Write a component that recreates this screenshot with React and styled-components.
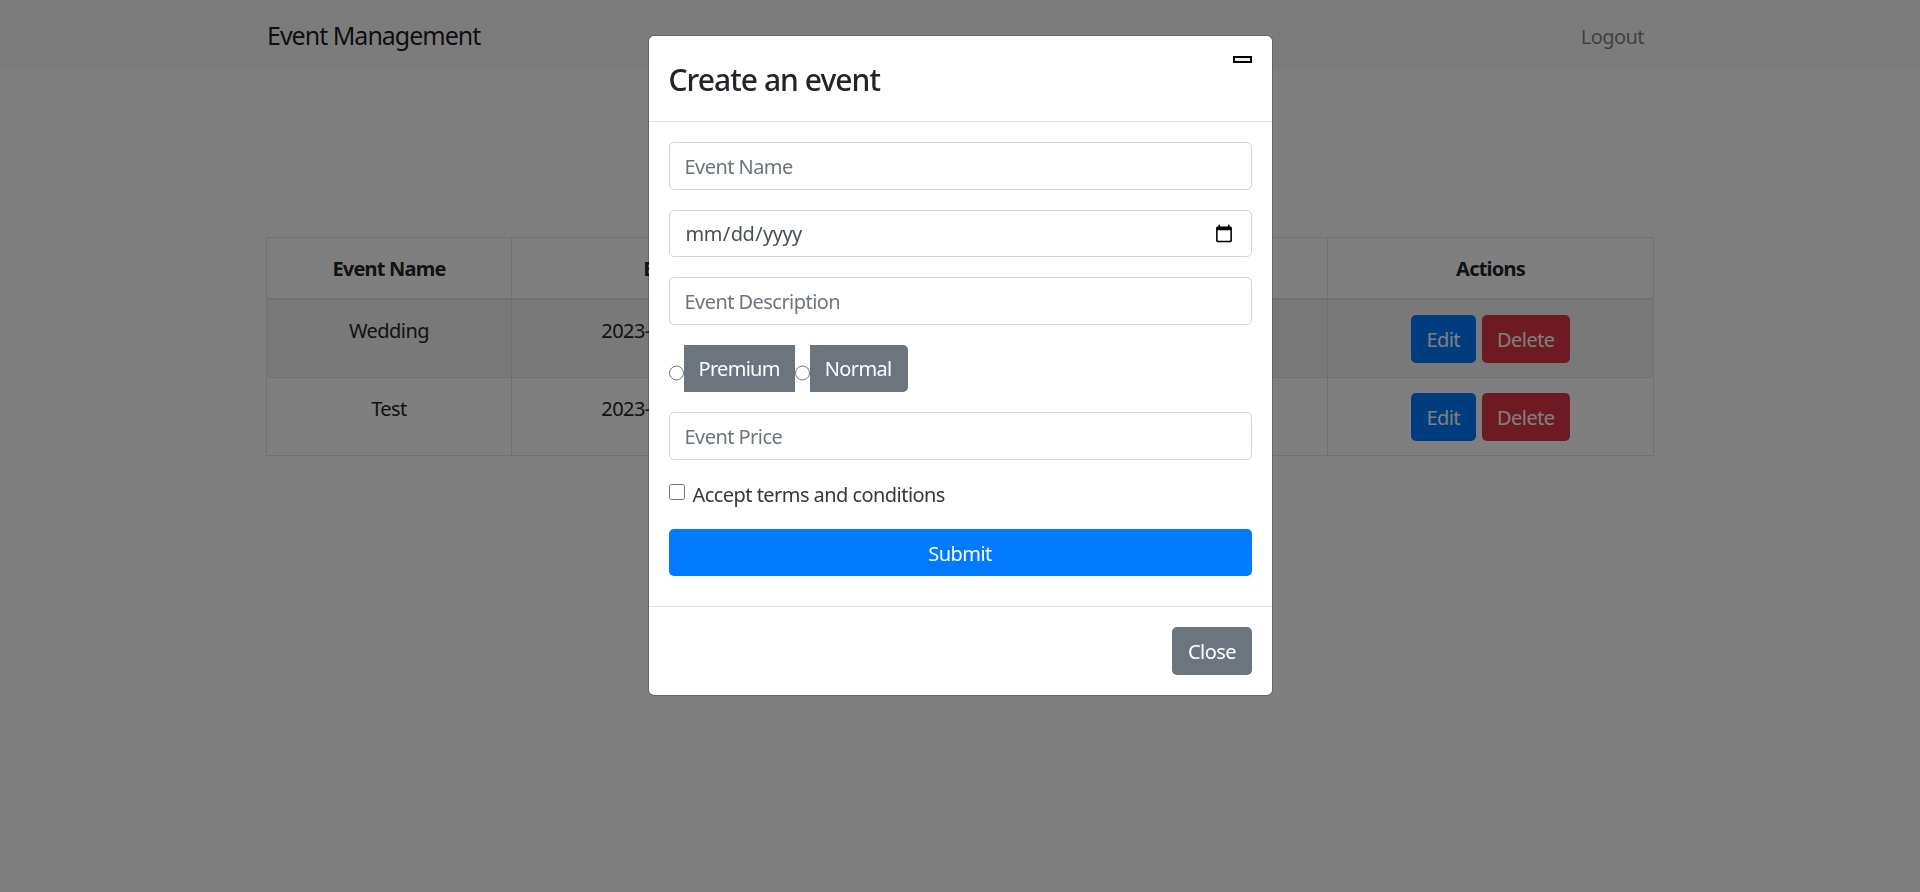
import React from "react";
import styled, { createGlobalStyle } from "styled-components";

const FONT = `"Noto Sans", "Open Sans", Arial, sans-serif`;

const Global = createGlobalStyle`
  * { box-sizing: border-box; }
  html, body { margin: 0; padding: 0; height: 100%; background: #fff; }
  body { font-family: ${FONT}; font-size: 20px; line-height: 30px; color: #212529; letter-spacing: -0.55px; overflow: hidden; }
  input, button { font-family: ${FONT}; letter-spacing: -0.55px; }
`;

const Navbar = styled.nav`
  height: 70px; background: #f8f9fa; padding-left: 266px;
`;
const NavInner = styled.div`
  width: 1388px; height: 100%; display: flex; align-items: center; justify-content: space-between; padding: 0 10px 0 1px;
`;
const Brand = styled.a`
  font-size: 25px; line-height: 37px; color: rgba(0,0,0,.9); letter-spacing: -1px;
`;
const NavLink = styled.a`
  color: rgba(0,0,0,.5); padding-top: 3px;
`;
const Main = styled.main`
  width: 1387px; margin-left: 266px; padding-top: 167px;
`;
const Table = styled.table`
  width: 100%; border-collapse: collapse; table-layout: fixed; text-align: center;
`;
const Th = styled.th`
  border: 1px solid #dee2e6; border-bottom-width: 2px; padding: 16px 15px 14px; font-weight: 700; vertical-align: bottom; white-space: nowrap; letter-spacing: -0.8px;
`;
const Td = styled.td`
  border: 1px solid #dee2e6; padding: 16px 15px 14px; vertical-align: top; white-space: nowrap; height: 77.5px;
`;
const ActionsTd = styled(Td)`
  padding: 15px 15px 14.5px;
`;
const Tr = styled.tr`
  background: ${p => (p.$striped ? "rgba(0,0,0,.05)" : "transparent")};
`;
const Btn = styled.button`
  height: 47.5px; padding: ${p => (p.$full ? "4px" : "2px")} 15.5px 0; border: 0; border-radius: 5px; color: #fff; font-size: 20px; line-height: 30px;
  background: ${p => p.$bg};
  ${p => p.$full && "width: 100%; display: block;"}
`;
const Actions = styled.div`
  display: flex; justify-content: center; gap: 6px;
`;
const Backdrop = styled.div`
  position: fixed; inset: 0; background: rgba(0,0,0,.5); display: flex; justify-content: center; align-items: flex-start; padding-top: 35px;
`;
const Modal = styled.div`
  width: 625px; background: #fff; border: 1px solid rgba(0,0,0,.2); border-radius: 6px; background-clip: padding-box;
`;
const ModalHeader = styled.header`
  display: flex; justify-content: space-between; align-items: flex-start; padding: 20px 20px 19px; border-bottom: 1px solid #dee2e6;
`;
const Title = styled.h4`
  margin: 1px 0 0; font-size: 30px; line-height: 45px; font-weight: 500; letter-spacing: -0.95px;
`;
const CloseBox = styled.button`
  width: 19px; height: 7px; padding: 0; border: 2px solid #000; background: #efefef;
`;
const ModalBody = styled.form`
  padding: 20px 20px 30px; display: flex; flex-direction: column; gap: 20px;
`;
const Input = styled.input`
  display: block; width: 100%; height: 47.5px; padding: 8.5px 15px 6.5px; border: 1px solid #ced4da; border-radius: 5px; background: #fff; color: #495057; font-size: 20px; line-height: 30px;
  &::placeholder { color: #6c757d; opacity: 1; }
`;
const RadioRow = styled.div`
  display: flex; align-items: flex-start; height: 47.5px;
`;
const Radio = styled.input`
  width: 15px; height: 16px; margin: 20px 0 0; flex: none;
`;
const RadioLabel = styled.label`
  height: 47.5px; padding: 9px ${p => (p.$last ? "16px" : "15px")} 0 15px; background: #6c757d; color: #fff;
  letter-spacing: ${p => (p.$last ? "-0.65px" : "-0.7px")};
  border-radius: ${p => (p.$last ? "0 5px 5px 0" : "0")};
`;
const CheckRow = styled.div`
  display: flex; align-items: flex-start; height: 29px;
`;
const Check = styled.input`
  width: 16px; height: 16px; margin: 4px 8px 0 0; flex: none;
`;
const CheckLabel = styled.label`
  color: #33383d;
`;
const ModalFooter = styled.footer`
  display: flex; justify-content: flex-end; padding: 20px; border-top: 1px solid #dee2e6;
`;

const rows = [{ name: "Wedding", date: "2023-06-18T17:30:00" }, { name: "Test", date: "2023-07-02T09:45:00" }];

export default function App() {
  return (
    <>
      <Global />
      <Navbar>
        <NavInner>
          <Brand>Event Management</Brand>
          <NavLink>Logout</NavLink>
        </NavInner>
      </Navbar>
      <Main>
        <Table>
          <colgroup>
            <col style={{ width: 245 }} />
            <col style={{ width: 364 }} />
            <col style={{ width: 452 }} />
            <col style={{ width: 326 }} />
          </colgroup>
          <thead>
            <tr><Th>Event Name</Th><Th>Event Date</Th><Th /><Th>Actions</Th></tr>
          </thead>
          <tbody>
            {rows.map((r, i) => (
              <Tr key={r.name} $striped={i === 0}>
                <Td>{r.name}</Td>
                <Td>{r.date}</Td>
                <Td />
                <ActionsTd>
                  <Actions>
                    <Btn $bg="#007bff">Edit</Btn>
                    <Btn $bg="#dc3545">Delete</Btn>
                  </Actions>
                </ActionsTd>
              </Tr>
            ))}
          </tbody>
        </Table>
      </Main>
      <Backdrop>
        <Modal>
          <ModalHeader>
            <Title>Create an event</Title>
            <CloseBox type="button" aria-label="Close" />
          </ModalHeader>
          <ModalBody>
            <Input placeholder="Event Name" />
            <Input type="date" />
            <Input placeholder="Event Description" />
            <RadioRow>
              <Radio type="radio" name="t" id="p" />
              <RadioLabel htmlFor="p">Premium</RadioLabel>
              <Radio type="radio" name="t" id="n" />
              <RadioLabel htmlFor="n" $last>Normal</RadioLabel>
            </RadioRow>
            <Input placeholder="Event Price" />
            <CheckRow>
              <Check type="checkbox" id="c" />
              <CheckLabel htmlFor="c">Accept terms and conditions</CheckLabel>
            </CheckRow>
            <Btn type="button" $bg="#007bff" $full>Submit</Btn>
          </ModalBody>
          <ModalFooter>
            <Btn type="button" $bg="#6c757d">Close</Btn>
          </ModalFooter>
        </Modal>
      </Backdrop>
    </>
  );
}
